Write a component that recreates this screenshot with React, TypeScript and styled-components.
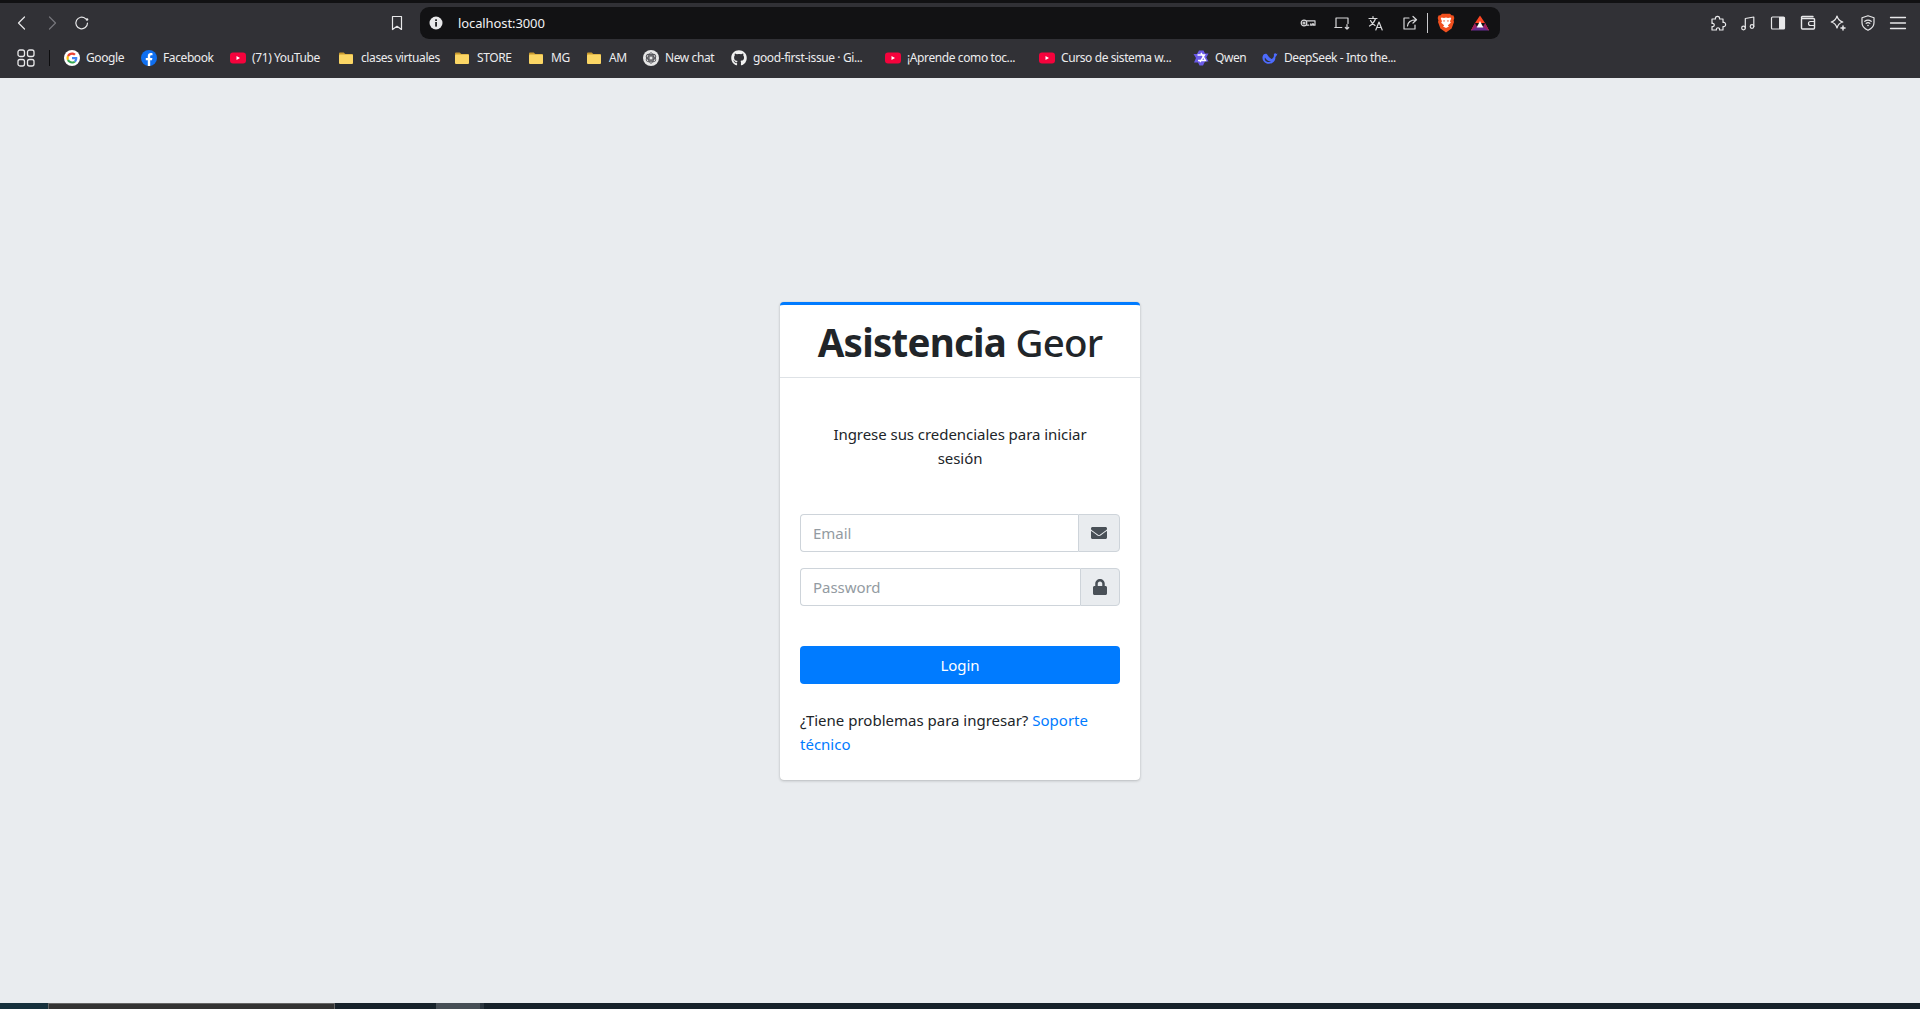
import React from 'react';
import styled, { createGlobalStyle } from 'styled-components';
import { FaEnvelope, FaLock, FaGithub } from 'react-icons/fa';

const Global = createGlobalStyle`
  html, body { margin: 0; padding: 0; height: 100%; overflow: hidden; }
  body { font-family: "Noto Sans", "Open Sans", sans-serif; }
`;

const Screen = styled.div`
  width: 1920px; height: 1009px; display: flex; flex-direction: column; background: #e9ecef;
`;
const Chrome = styled.header`
  flex: 0 0 78px; display: flex; flex-direction: column; background: #313136;
  border-top: 3px solid #111113; box-sizing: border-box; color: #e8e8ea;
`;
const Toolbar = styled.div`
  height: 32px; margin-top: 4px; display: flex; align-items: center; padding-left: 7px;
`;
const NavGroup = styled.div`display: flex; align-items: center;`;
const ToolIcon = styled.span<{ $dim?: boolean }>`
  width: 30px; height: 32px; display: flex; align-items: center; justify-content: center;
  color: ${p => (p.$dim ? '#77777c' : '#e8e8ea')};
`;
const BookmarkBtn = styled(ToolIcon)`margin-left: 285px; width: 30px;`;
const UrlBar = styled.div`
  width: 1080px; height: 32px; margin-left: 8px; background: #121214; border-radius: 9px;
  display: flex; align-items: center; padding: 0 0 0 8px; box-sizing: border-box;
`;
const InfoDot = styled.span`
  width: 16px; height: 32px; display: flex; align-items: center; justify-content: center;
`;
const UrlText = styled.span`
  margin-left: 14px; font-size: 13px; letter-spacing: -0.1px; color: #f0f0f2; flex: 1;
`;
const BarIcons = styled.div`display: flex; align-items: center; padding-right: 3px;`;
const BarIcon = styled.span`
  width: 34px; height: 32px; display: flex; align-items: center; justify-content: center; color: #d8d8da;
`;
const BarSep = styled.span`width: 1px; height: 20px; background: #c9c9cc; margin: 0 1px 0 0;`;
const RightIcons = styled.div`display: flex; align-items: center; margin-left: 203px;`;
const Bookmarks = styled.nav`
  height: 32px; margin-top: 3px; display: flex; align-items: center; padding-left: 16px;
`;
const AppsBtn = styled.span`width: 20px; height: 20px; display: flex; align-items: center; justify-content: center;`;
const BarDivider = styled.span`width: 1px; height: 16px; background: #0c0c0e; margin: 0 14px 0 13px;`;
const BookmarkList = styled.div`display: flex; align-items: center; gap: 16px;`;
const Bookmark = styled.a`display: flex; align-items: center; gap: 6px; color: #ececee;`;
const Favicon = styled.span`width: 16px; height: 16px; display: flex; align-items: center; justify-content: center; color: #f0f0f0;`;
const BookmarkLabel = styled.span<{ $w: number }>`
  width: ${p => p.$w}px; font-size: 12px; letter-spacing: -0.4px; white-space: nowrap; padding-bottom: 1px;
`;

const Main = styled.main`
  flex: 1; display: flex; align-items: center; justify-content: center; background: #e9ecef;
`;
const Card = styled.section`
  width: 360px; height: 478px; box-sizing: border-box; background: #fff; border-top: 3px solid #007bff;
  border-radius: 4px; box-shadow: 0 0 1px rgba(0,0,0,.125), 0 1px 3px rgba(0,0,0,.2);
  display: flex; flex-direction: column;
`;
const CardHeader = styled.div`
  height: 72px; border-bottom: 1px solid #dee2e6; box-sizing: content-box; display: flex;
  align-items: center; justify-content: center; padding-top: 0;
`;
const Title = styled.h1`
  margin: 2px 0 0; font-size: 38.5px; font-weight: 500; color: #212529; letter-spacing: -0.75px; line-height: 48px;
  b { font-weight: 700; }
`;
const CardBody = styled.div`padding: 44px 20px 0; display: flex; flex-direction: column;`;
const Message = styled.p`
  margin: 0 0 44px; padding: 0 20px; text-align: center; font-size: 15px; line-height: 24px; color: #212529;
  letter-spacing: -0.05px;
`;
const InputGroup = styled.div`display: flex; height: 38px; margin-bottom: 16px;`;
const Input = styled.input`
  flex: 1; min-width: 0; box-sizing: border-box; height: 38px; padding: 6px 12px; border: 1px solid #ced4da;
  border-right: 0; border-radius: 4px 0 0 4px; font: 15px "Noto Sans", sans-serif; letter-spacing: -0.05px;
  color: #495057; background: #fff; outline: none;
  &::placeholder { color: #939ba2; opacity: 1; }
`;
const Append = styled.span<{ $w: number }>`
  flex: 0 0 ${p => p.$w}px; box-sizing: border-box; height: 38px; display: flex; align-items: center; justify-content: center;
  background: #e9ecef; border: 1px solid #ced4da; border-radius: 0 4px 4px 0; color: #495057; font-size: 16px;
`;
const Button = styled.button`
  margin-top: 24px; height: 38px; border: 0; border-radius: 4px; background: #007bff; color: #fff;
  font: 15px "Noto Sans", sans-serif; letter-spacing: -0.05px; padding: 0;
`;
const Help = styled.p`
  margin: 24px 0 0; font-size: 15px; line-height: 24px; color: #212529; letter-spacing: 0;
  a { color: #007bff; text-decoration: none; }
`;
const Taskbar = styled.footer`flex: 0 0 6px; display: flex; background: #17222a;`;
const TaskSeg = styled.span<{ $w: number; $c: string; $t?: string }>`
  flex: 0 0 ${p => p.$w}px; box-sizing: border-box; background: ${p => p.$c};
  ${p => p.$t ? `border: 1px solid ${p.$t}; border-bottom: 0;` : ''}
`;

const S = (p: React.SVGProps<SVGSVGElement>) => (
  <svg width={18} height={18} viewBox="0 0 18 18" fill="none" stroke="currentColor" strokeWidth={1.2} strokeLinecap="round" strokeLinejoin="round" {...p} />
);

const GoogleIcon = () => (
  <svg width="16" height="16" viewBox="0 0 48 48">
    <circle cx="24" cy="24" r="24" fill="#fff" />
    <g transform="translate(7.5 7.5) scale(.69)">
      <path fill="#EA4335" d="M24 9.5c3.5 0 6.7 1.2 9.2 3.6l6.9-6.9C35.9 2.4 30.5 0 24 0 14.6 0 6.5 5.4 2.6 13.2l8 6.2C12.5 13.7 17.800 9.500 24 9.500z" />
      <path fill="#4285F4" d="M47 24.500c0-1.600-.1-3.100-.4-4.500H24v9h13c-.6 3-2.200 5.500-4.700 7.200l7.300 5.700C44.300 37.600 47 31.600 47 24.500z" />
      <path fill="#FBBC05" d="M10.500 28.600c-.5-1.400-.8-3-.8-4.600s.3-3.200.8-4.600l-8-6.200C.9 16.500 0 20.100 0 24s.9 7.500 2.600 10.800l7.900-6.200z" />
      <path fill="#34A853" d="M24 48c6.500 0 11.900-2.100 15.900-5.800l-7.300-5.700c-2.200 1.500-5 2.300-8.600 2.300-6.200 0-11.500-4.200-13.400-9.800l-8 6.200C6.500 42.600 14.600 48 24 48z" />
    </g>
  </svg>
);
const FacebookIcon = () => (
  <svg width="16" height="16" viewBox="0 0 16 16">
    <circle cx="8" cy="8" r="8" fill="#0f6ff0" />
    <path fill="#fff" d="M11 10.300l.4-2.300H9.200V6.500c0-.7.300-1.200 1.200-1.200h1.100v-2C11 3.200 10.400 3.100 9.800 3.100 8 3.100 6.800 4.200 6.800 6.200V8h-2v2.300h2V16h2.400v-5.700z" />
  </svg>
);
const YoutubeIcon = () => (
  <svg width="16" height="16" viewBox="0 0 16 16">
    <rect x="0" y="2.500" width="16" height="11" rx="3" fill="#f5033c" />
    <path fill="#fff" d="M6.500 6v4L10 8z" />
  </svg>
);
const FolderIcon = () => (
  <svg width="16" height="16" viewBox="1 0 16 16">
    <path fill="#c99a2e" d="M1 3.500A1 1 0 0 1 2 2.500h3.700l1.600 1.500H14a1 1 0 0 1 1 1V6H1z" />
    <rect x="1" y="4.500" width="14" height="9.500" rx="1" fill="#fbd665" />
  </svg>
);
const ChatIcon = () => (
  <svg width="16" height="16" viewBox="0 0 16 16">
    <circle cx="8" cy="8" r="8" fill="#e6e6e6" />
    <g fill="none" stroke="#55555a" strokeWidth=".9">
      <circle cx="8" cy="8" r="2" />
      <ellipse cx="8" cy="8" rx="5.200" ry="2.700" transform="rotate(30 8 8)" />
      <ellipse cx="8" cy="8" rx="5.200" ry="2.700" transform="rotate(90 8 8)" />
      <ellipse cx="8" cy="8" rx="5.200" ry="2.700" transform="rotate(150 8 8)" />
    </g>
  </svg>
);
const QwenIcon = () => (
  <svg width="16" height="16" viewBox="0 0 16 16">
    <path fill="#6a5ae8" d="M6 .5h4.500L12 3.500h3.500L13.300 7.500 15.500 11.500H12L10 15.500H6.500L5 12.500H1L3 8 .5 4H4z" />
    <path fill="none" stroke="#fff" strokeWidth="1.400" d="M4.500 5H11.500L7 12M8 2.800 12.500 10.500H5" />
  </svg>
);
const DeepSeekIcon = () => (
  <svg width="16" height="16" viewBox="0 0 16 16">
    <path fill="#4d6bfe" d="M15.500 3.500c-.4.300-.8.500-1.200.600-.3-.7-1-1-1.700-.6-.8.400-.9 1.300-.6 2.100-.3 1.700-1 3-2.600 3.300C7.800 8 6 6 5 4.200 3.500 3.400 1.500 4 .8 6c-1 2.600.4 6 3.300 7.200 3 1.200 6.500.3 8.300-2.300.9-1.400 1-2.900 1-4 .7-.5 1.400-1.500 2.100-3.400z" />
    <path fill="#313136" d="M3 7.500c1.500 2.500 3.500 4 6 4-2 1.200-5 .5-6-1.500-.4-.8-.3-1.800 0-2.500z" />
  </svg>
);
const BraveIcon = () => (
  <svg width="18" height="20" viewBox="0 0 18 20">
    <path fill="#f1501f" d="M5 .8h8l1.500 1.500 2 .3.800 2.400-.7 2.500.4 1.500-2.400 6.500L9 19.500 3.400 15.500 1 9l.4-1.500L.7 5 1.500 2.600l2-.3z" />
    <path fill="#fff" d="M9 4.500l2 .6 2.500-.6.700 1-1.200 2.800.8 1.500-1.800 1.400-1.200 1.200 1.200 1L9 15l-3-1.600 1.200-1-1.200-1.200L4.200 9.800 5 8.300 3.800 5.500l.7-1L7 5.100z" />
    <path fill="#f1501f" d="M6 7.500h2.200L7 9zM12 7.500H9.800L11 9z" />
  </svg>
);
const RewardsIcon = () => (
  <svg width="18" height="16" viewBox="0 0 18 16">
    <path fill="#662d91" d="M0 15.500h18L15.500 11H2.500z" />
    <path fill="#ff4724" d="M9 .5 14 8H4z" />
    <path fill="#ff4724" d="M4 8 .0 15.500 3.500 13zM14 8l4 7.500-3.500-2.500z" />
    <path fill="#9e1f63" d="M0 15.500 4 8l2 4zM18 15.500 14 8l-2 4z" />
    <path fill="#fff" d="M9 6l3.300 6.500H5.700z" />
  </svg>
);

const bookmarks: { label: string; w: number; icon: React.ReactNode }[] = [
  { label: 'Google', w: 39, icon: <GoogleIcon /> },
  { label: 'Facebook', w: 51, icon: <FacebookIcon /> },
  { label: '(71) YouTube', w: 71, icon: <YoutubeIcon /> },
  { label: 'clases virtuales', w: 78, icon: <FolderIcon /> },
  { label: 'STORE', w: 36, icon: <FolderIcon /> },
  { label: 'MG', w: 20, icon: <FolderIcon /> },
  { label: 'AM', w: 18, icon: <FolderIcon /> },
  { label: 'New chat', w: 50, icon: <ChatIcon /> },
  { label: 'good-first-issue · Gi...', w: 116, icon: <FaGithub size={16} /> },
  { label: '¡Aprende como toc...', w: 116, icon: <YoutubeIcon /> },
  { label: 'Curso de sistema w...', w: 116, icon: <YoutubeIcon /> },
  { label: 'Qwen', w: 31, icon: <QwenIcon /> },
  { label: 'DeepSeek - Into the...', w: 114, icon: <DeepSeekIcon /> },
];

export default function App() {
  return (
    <Screen>
      <Global />
      <Chrome>
        <Toolbar>
          <NavGroup>
            <ToolIcon><S><path d="M11.500 3 5.500 9l6 6" /></S></ToolIcon>
            <ToolIcon $dim><S><path d="M6.500 3l6 6-6 6" /></S></ToolIcon>
            <ToolIcon>
              <S>
                <path d="M14.500 9a5.800 5.800 0 1 1-2-4.400" />
                <circle cx="14" cy="5.500" r="1.300" fill="currentColor" stroke="none" />
              </S>
            </ToolIcon>
          </NavGroup>
          <BookmarkBtn><S><path d="M4.500 2.500h9v13L9 12.300 4.500 15.500z" /></S></BookmarkBtn>
          <UrlBar>
            <InfoDot>
              <svg width="14" height="14" viewBox="0 0 14 14">
                <circle cx="7" cy="7" r="6.500" fill="#e8e8ea" />
                <rect x="6.200" y="6" width="1.700" height="4.600" fill="#121214" />
                <rect x="6.200" y="3.300" width="1.700" height="1.700" fill="#121214" />
              </svg>
            </InfoDot>
            <UrlText>localhost:3000</UrlText>
            <BarIcons>
              <BarIcon>
                <S>
                  <circle cx="5" cy="9" r="2.800" />
                  <circle cx="5" cy="9" r="1" />
                  <path d="M7.800 6.800h8.200v4.400h-1.500v-1.400h-1.300v1.400h-1.500v-1.400M7.800 11.200h2" />
                </S>
              </BarIcon>
              <BarIcon>
                <S>
                  <path d="M8 13.500H3V4h12v5.500" />
                  <path d="M1.800 13.500h7M14 10.500v4.500M12.300 13.500l1.700 1.700 1.700-1.700" />
                </S>
              </BarIcon>
              <BarIcon>
                <S>
                  <path d="M2 4.500h8M6 2.500v2M8.500 4.500C7.500 8 5 10.500 2.500 12M3.500 6.500c1 2.300 2.800 4 4.500 5" />
                  <path d="M8.800 16 12 8l3.200 8M10 13.500h4" />
                </S>
              </BarIcon>
              <BarIcon>
                <S>
                  <path d="M8 4H3v11h11v-4" />
                  <path d="M6.500 12c.3-4 3-6.200 8.500-6.200M12 2.500l3.500 3.300L12 9" />
                </S>
              </BarIcon>
              <BarSep />
              <BarIcon><BraveIcon /></BarIcon>
              <BarIcon><RewardsIcon /></BarIcon>
            </BarIcons>
          </UrlBar>
          <RightIcons>
            <ToolIcon>
              <S><path d="M3 5H6.500c-1-3.500 5-3.500 4 0H14V8.500c3.500-1 3.500 5 0 4V16H10.500c1-3-4-3-3 0H3V12.500c3 1 3-4 0-3z" /></S>
            </ToolIcon>
            <ToolIcon>
              <S>
                <circle cx="4.500" cy="14" r="1.800" />
                <circle cx="13" cy="12.500" r="1.800" />
                <path d="M6.300 14V4.500L14.800 3v9.500" />
              </S>
            </ToolIcon>
            <ToolIcon>
              <S>
                <rect x="2.500" y="3" width="13" height="12" rx="1" />
                <rect x="10" y="3" width="5.500" height="12" fill="currentColor" stroke="none" />
              </S>
            </ToolIcon>
            <ToolIcon>
              <S>
                <path d="M2.500 5V14a1 1 0 0 0 1 1h11a1 1 0 0 0 1-1V5.500a1 1 0 0 0-1-1H3.500A1 1 0 0 1 3.500 2.500h10.500" strokeWidth={1.400} />
                <path d="M15.500 7.500h-4a2 2 0 0 0 0 4h4" />
              </S>
            </ToolIcon>
            <ToolIcon>
              <S>
                <path d="M8 2c.8 3.300 2.500 5 5.800 6-3.300 1-5 2.700-5.800 6-.8-3.300-2.500-5-5.800-6C5.500 7 7.200 5.300 8 2z" />
                <path d="M14 12v4M12 14h4" strokeWidth={1.500} />
              </S>
            </ToolIcon>
            <ToolIcon>
              <S>
                <path d="M9 1.800l6 2v5c0 3.500-2.500 6-6 7.500-3.500-1.500-6-4-6-7.500v-5z" />
                <path d="M5.800 7.300c2-1.500 4.400-1.500 6.400 0M7.200 9.300c1.200-.8 2.400-.8 3.600 0" />
                <circle cx="9" cy="11.500" r=".8" fill="currentColor" stroke="none" />
              </S>
            </ToolIcon>
            <ToolIcon>
              <S strokeWidth={1.300}><path d="M1.500 3.500h15M1.500 9h15M1.500 14.500h15" /></S>
            </ToolIcon>
          </RightIcons>
        </Toolbar>
        <Bookmarks>
          <AppsBtn>
            <svg width="18" height="18" viewBox="0 0 18 18" fill="none" stroke="#e8e8ea" strokeWidth="1.300">
              <rect x="1" y="1" width="6.500" height="6.500" rx="2" />
              <rect x="10.500" y="1" width="6.500" height="6.500" rx="2" />
              <rect x="1" y="10.500" width="6.500" height="6.500" rx="2" />
              <rect x="10.500" y="10.500" width="6.500" height="6.500" rx="2" />
            </svg>
          </AppsBtn>
          <BarDivider />
          <BookmarkList>
            {bookmarks.map(b => (
              <Bookmark key={b.label}>
                <Favicon>{b.icon}</Favicon>
                <BookmarkLabel $w={b.w}>{b.label}</BookmarkLabel>
              </Bookmark>
            ))}
          </BookmarkList>
        </Bookmarks>
      </Chrome>
      <Main>
        <Card>
          <CardHeader>
            <Title><b>Asistencia</b> Geor</Title>
          </CardHeader>
          <CardBody>
            <Message>Ingrese sus credenciales para iniciar sesión</Message>
            <InputGroup>
              <Input placeholder="Email" />
              <Append $w={42}><FaEnvelope /></Append>
            </InputGroup>
            <InputGroup>
              <Input placeholder="Password" />
              <Append $w={40}><FaLock /></Append>
            </InputGroup>
            <Button>Login</Button>
            <Help>¿Tiene problemas para ingresar? <a href="#soporte">Soporte técnico</a></Help>
          </CardBody>
        </Card>
      </Main>
      <Taskbar>
        <TaskSeg $w={48} $c="#16303c" />
        <TaskSeg $w={287} $c="#333333" $t="#666666" />
        <TaskSeg $w={101} $c="#17222a" />
        <TaskSeg $w={44} $c="#464e55" />
        <TaskSeg $w={4} $c="#2c363e" />
      </Taskbar>
    </Screen>
  );
}
